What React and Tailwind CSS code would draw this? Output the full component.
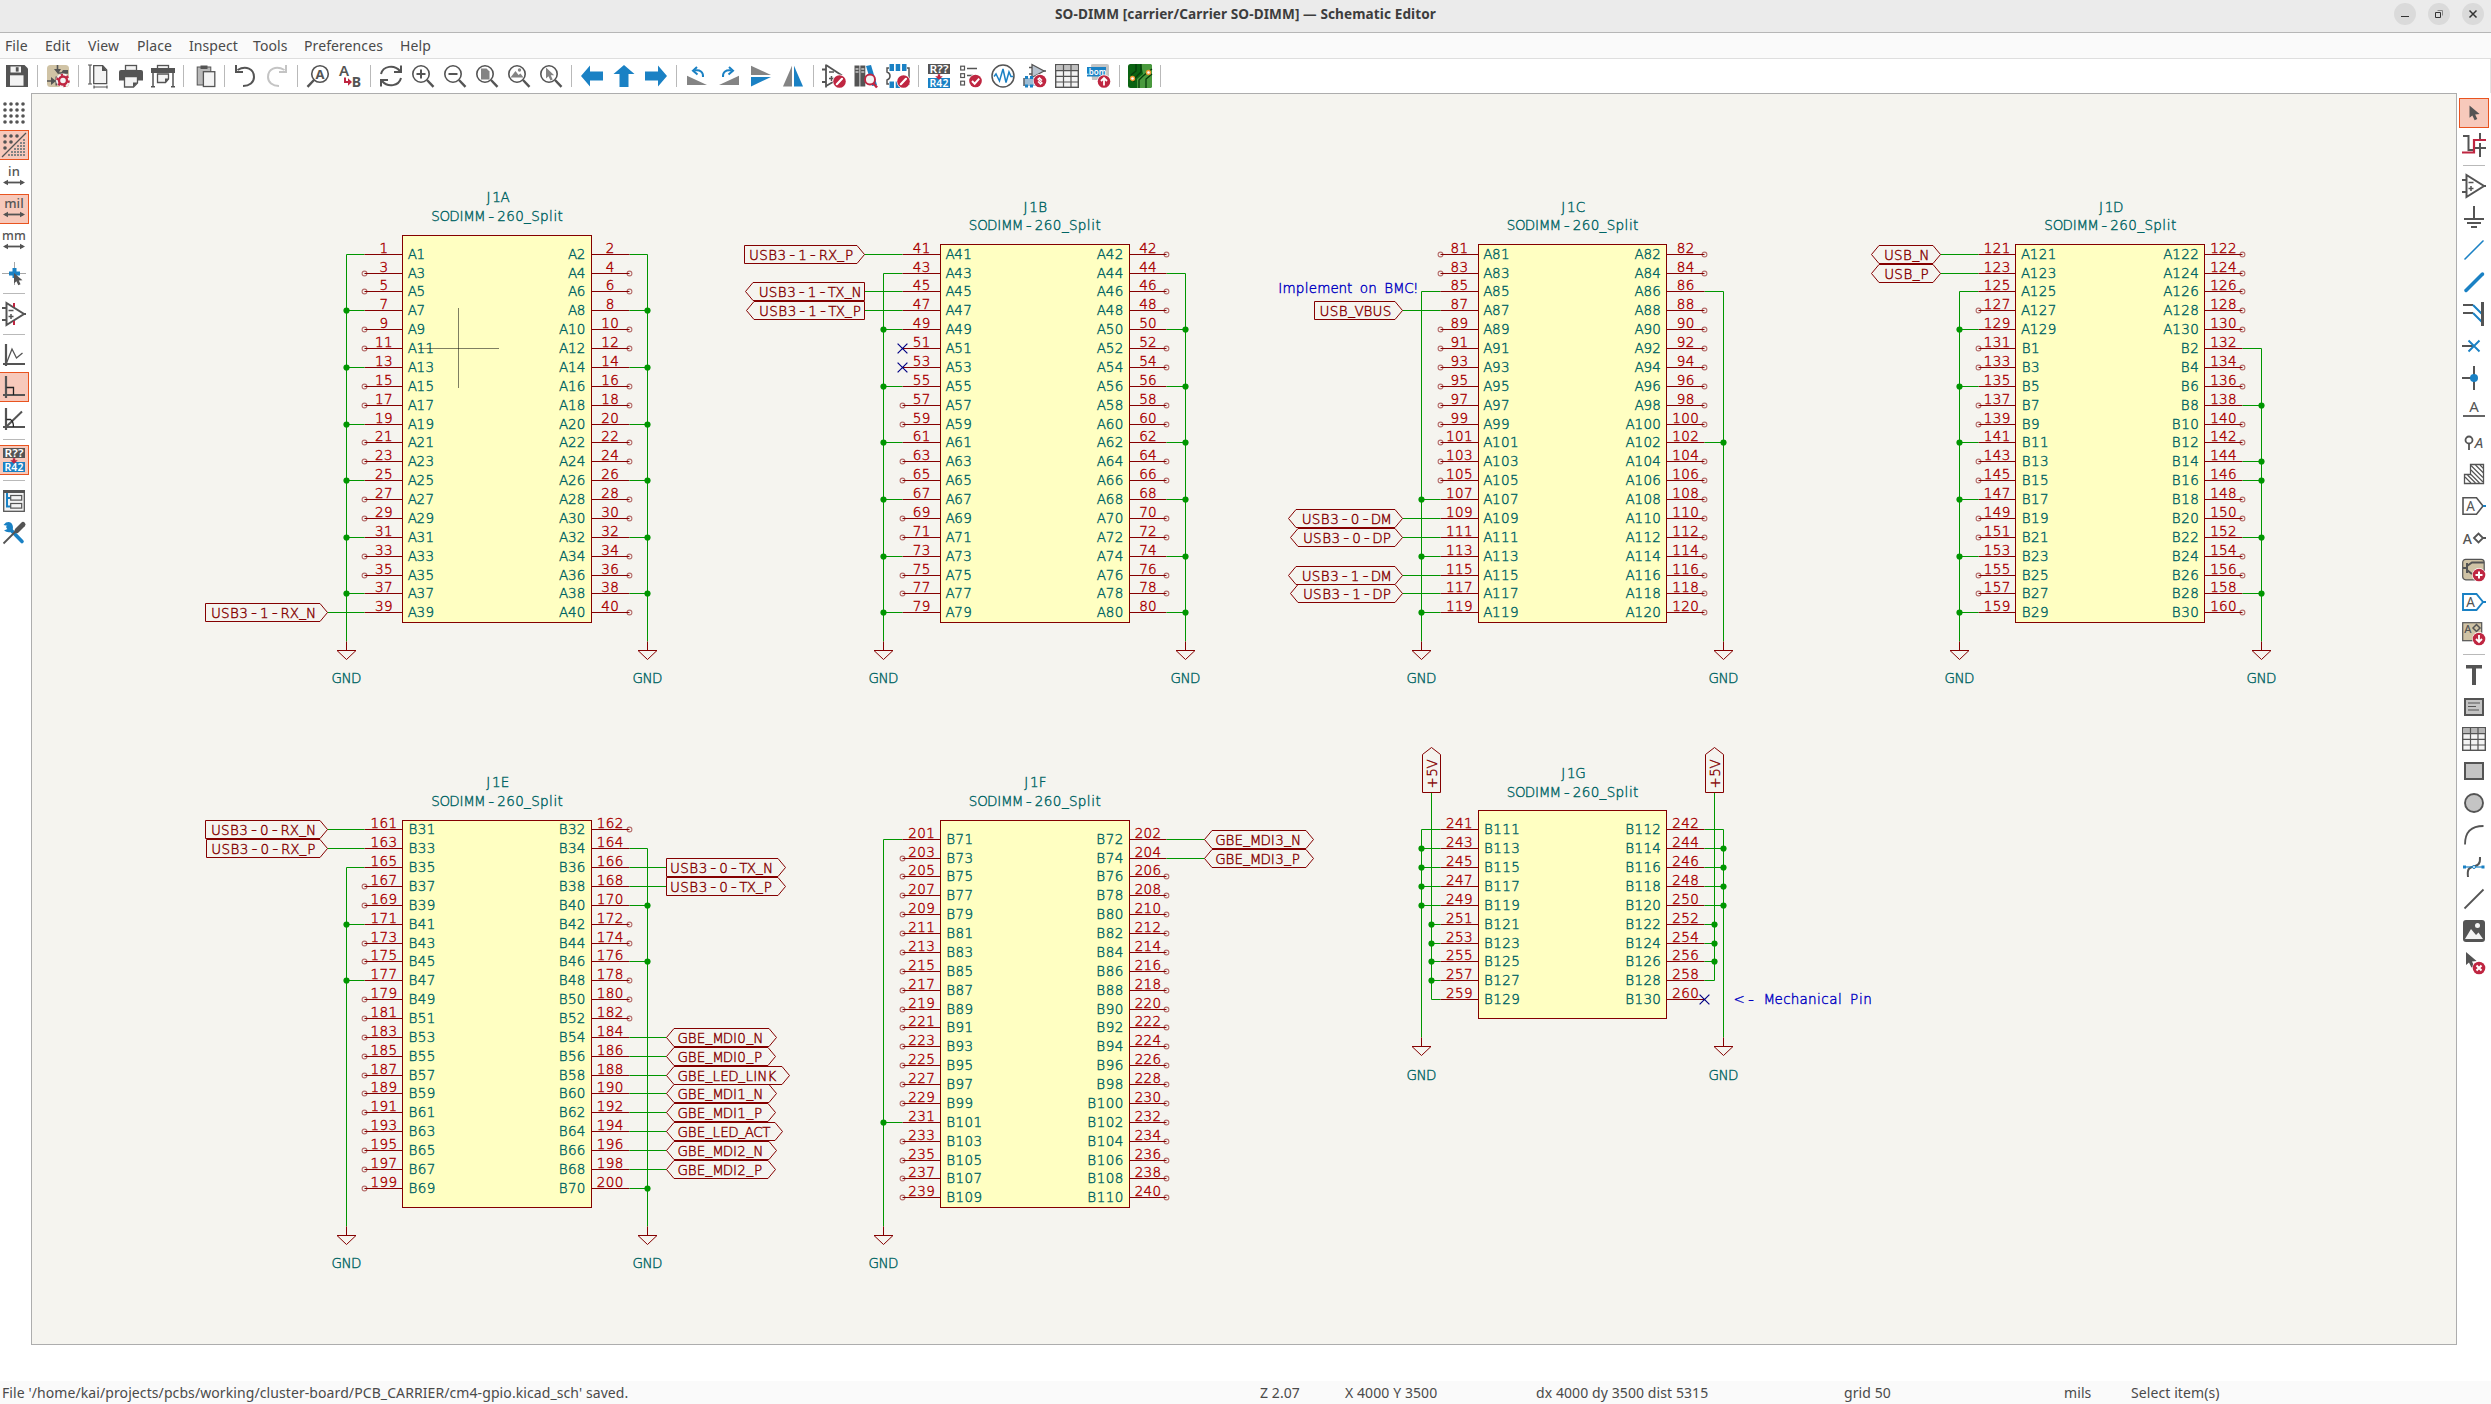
import React from "react";

const G = "#545454";
const B = "#1a81c4";
const R = "#bf2641";
const L = "#f3f3f3";
const M = "#848484";
const T = "#d0c3a5";
const SANS = "Noto Sans, Open Sans, sans-serif";

/* ---------- toolbar icons (24 x 24) ---------- */

const line = (d, w = 2, c = G, extra = {}) => <path d={d} fill="none" stroke={c} strokeWidth={w} {...extra} />;
const fill = (d, c = G) => <path d={d} fill={c} />;
const letter = (s, x, y, size, c = G, weight = 600, extra = {}) => (
  <text x={x} y={y} fontSize={size} fill={c} fontWeight={weight} fontFamily={SANS} textAnchor="middle" {...extra}>{s}</text>
);
const Badge = ({ x = 17.5, y = 17.5, r = 6.3, children }) => (
  <g>
    <circle cx={x} cy={y} r={r + 0.6} fill="#fff" />
    <circle cx={x} cy={y} r={r} fill={R} />
    {children}
  </g>
);
const Pencil = () => <Badge>{line("M14.8 20.2 20 14.8", 2.2, "#fff", { strokeLinecap: "round" })}</Badge>;
const Lens = ({ children }) => (
  <g>
    <circle cx="10" cy="10" r="8.2" fill="#fff" stroke={G} strokeWidth="1.6" />
    {line("M16 16 22.5 22.8", 2.4)}
    {children}
  </g>
);
const annotate = (
  <g>
    <rect x="1" y="0" width="22" height="10" fill={G} />
    {letter("R??", 12, 9, 10.5, "#fff", 600, { textLength: 19, lengthAdjust: "spacingAndGlyphs" })}
    <rect x="1" y="14" width="22" height="10" fill={B} />
    {letter("R42", 12, 22.8, 10.5, "#fff", 600, { textLength: 19, lengthAdjust: "spacingAndGlyphs" })}
    {fill("M10.8 10.2h2.4v2h2.6L12 15.8 8.2 12.2h2.6z", R)}
  </g>
);
const opamp = (
  <g>
    {line("M4.5 1v22L22 12z", 2)}
    {line("M0 6h4M0 18h4M21 12h3", 2)}
    {line("M6.5 8.5h5M6.5 14.5h5M9 12v5", 1.5)}
  </g>
);
const units = (s) => (
  <g>
    {letter(s, 12, 11, s === "mm" ? 12.5 : 13, G, 500)}
    {line("M3 17.5h18", 1.8)}
    {fill("M1 17.5 6 14.8v5.4zM23 17.5 18 14.8v5.4z")}
  </g>
);
const table = (head) => (
  <g>
    <rect x="0.7" y="0.7" width="22.6" height="22.6" fill={L} stroke={G} strokeWidth="1.4" />
    <rect x="1.3" y="1.3" width="21.4" height="5" fill={head} />
    {line("M1 6.7h22M1 12.4h22M1 18h22M8.5 1v22M16 1v22", 1.2)}
  </g>
);
const pointer = (x, y, k = 1) => (
  <path transform={`translate(${x} ${y}) scale(${k})`} d="M0 0v13l3-2.6 2.4 5 2.8-1.2L6 9.4l4.6-.4z" fill={G} />
);

const icons = {
  save: (
    <g>
      {fill("M1 1h18.5L23 4.5V23H1z")}
      <rect x="5.5" y="2.5" width="10.5" height="6" fill={L} />
      <rect x="10.8" y="3.2" width="2.8" height="4.4" fill={G} />
      <rect x="5" y="11.3" width="13.5" height="10.4" fill={L} />
    </g>
  ),
  setup: (
    <g>
      <rect x="1" y="1" width="22" height="22" rx="3.5" fill={T} />
      {line("M11.5 1v6M1 17h6M12 9h10", 1.6)}
      {fill("M8 5l4 5 3-5zM17 6h5v3h-7zM5 13l5 4-5 4zM9.5 12.5h1.5v9H9.5z")}
      <circle cx="17" cy="16.5" r="7" fill={L} />
      <circle cx="17" cy="16.5" r="4" fill="none" stroke={R} strokeWidth="2.4" />
      <circle cx="17" cy="16.5" r="5.8" fill="none" stroke={R} strokeWidth="2" strokeDasharray="2.4 3.67" />
    </g>
  ),
  page: (
    <g>
      {line("M3 1v19M1 1h4M1 20h4M7 23h13M7 21.5v3M20 21.5v3", 1.2)}
      <path d="M6.7 1.6h9l4 4.5v13.6h-13z" fill={L} stroke={G} strokeWidth="1.3" />
      {fill("M15 1v6h5z")}
    </g>
  ),
  print: (
    <g>
      <rect x="6.5" y="1.5" width="11" height="5" fill={L} stroke={G} strokeWidth="1.3" />
      <path d="M2 6h20q2 0 2 2v8.500H0V8q0-2 2-2z" fill={G} />
      <path d="M5.500 12.500h13V19l-4 4h-9z" fill={L} stroke={G} strokeWidth="1.3" />
      {fill("M14 23v-4.500h4.500z")}
    </g>
  ),
  plot: (
    <g>
      <rect x="6.5" y="1.500" width="11" height="4" fill={L} stroke={G} strokeWidth="1.3" />
      <rect x="0" y="4" width="24" height="5" fill={G} />
      {line("M2 9v14M22 9v14M0 22.800h4M20 22.800h4", 1.500)}
      <path d="M6.500 10h11v5l-3 3.500h-8z" fill={L} stroke={G} strokeWidth="1.3" />
      {fill("M14 18.500v-4h4z")}
    </g>
  ),
  paste: (
    <g>
      <rect x="5.200" y="3" width="13.600" height="18" fill="#b9b9b9" stroke={G} strokeWidth="1" />
      <rect x="8.500" y="1.500" width="7" height="3.500" fill={G} />
      <rect x="11.400" y="7.700" width="11.400" height="14.800" fill={L} stroke={G} strokeWidth="1.3" />
    </g>
  ),
  undo: (
    <g>
      {line("M4.500 6C13 1 21 5 21 13c0 5.500-4.500 9-11 9", 2)}
      {line("M3 1v7h7", 2)}
    </g>
  ),
  redo: (
    <g>
      {line("M19.500 6C11 1 3 5 3 13c0 5.500 4.500 9 11 9", 2, "#c4c4c4")}
      {line("M21 1v7h-7", 2, "#c4c4c4")}
    </g>
  ),
  find: (
    <g>
      <circle cx="14" cy="10" r="8.300" fill="#fff" stroke={G} strokeWidth="1.600" />
      {line("M8 16 1.500 22.800", 2.400)}
      {letter("A", 14, 14.800, 13, G, 700)}
    </g>
  ),
  replace: (
    <g>
      {letter("A", 6, 11.500, 15, G, 600)}
      {letter("B", 18.500, 23, 14, G, 700)}
      {line("M7 13.500v4.500h5", 2, R)}
      {fill("M10 14.300 14 18l-4 3.700z", R)}
    </g>
  ),
  refresh: (
    <g>
      {line("M2 10C4 2 15 0 21 7M22 14C20 22 9 24 3 17", 2)}
      {line("M22 1.500V8h-7M2 22.500V16h7", 2)}
    </g>
  ),
  zoomIn: <Lens>{line("M5.500 10h9M10 5.500v9", 2)}</Lens>,
  zoomOut: <Lens>{line("M5.500 10h9", 2)}</Lens>,
  zoomFit: <Lens>{fill("M6 4.500h5.500l3 3V15.500H6z", M)}</Lens>,
  zoomObj: <Lens>{fill("M3.500 13.500 8.500 7l3 4 2-1.500 3 4z", M)}<circle cx="12.500" cy="6" r="1.700" fill={M} /></Lens>,
  zoomSel: <Lens><path d="M7 3.500v11l2.500-2.300 2 4.300 2.200-1-2-4.200h3.500z" fill={M} /></Lens>,
  left: fill("M1 12 10 1.500V7.500h13v9H10V22.500z", B),
  up: fill("M12 1 22.500 10H16.500v13h-9V10H1.500z", B),
  right: fill("M23 12 14 1.500V7.500H1v9h13V22.500z", B),
  rotL: <g>{fill("M2 11.700 22 21H2z", M)}{line("M18 13c.5-5-3-7.500-8.500-6.500", 2, B)}{line("M12 3 8 6.800l4.500 3.700", 2, B)}</g>,
  rotR: <g>{fill("M22 11.700 2 21h20z", M)}{line("M6 13c-.5-5 3-7.500 8.500-6.500", 2, B)}{line("M12 3l4 3.800-4.500 3.700", 2, B)}</g>,
  mirV: <g>{fill("M2 1.700 22 11H2z", M)}{fill("M2 13h20L2 22.500z", B)}</g>,
  mirH: <g>{fill("M11 1.700V22.500H2z", M)}{fill("M13 1.700V22.500h9z", B)}</g>,
  symEd: (
    <g>
      {line("M4 .500v23M4 1 20 11.500M0 5.500h4M0 18h4M4 22l7-4", 1.800)}
      {line("M7 8h5M7 14.500h5M9.500 12v5", 1.500)}
      <Pencil />
    </g>
  ),
  symLib: (
    <g>
      {fill("M.500 1.500h5v21h-5zM6.300 1.500h5v21h-5z")}
      {line("M1.500 5h3M1.500 8h3M7.300 5h3M7.300 8h3", 1, "#fff")}
      {fill("M12 2l5-1 6 20-5 1z", B)}
      <circle cx="16" cy="15.500" r="5" fill={L} stroke={R} strokeWidth="1.900" />
      {line("M19.500 19.500 23 23.500", 2.500, R)}
    </g>
  ),
  fpEd: (
    <g>
      {line("M3 4H1v4q3 1 3 4t-3 4v4h2M21 4h2v17", 1.500)}
      {fill("M3.500 0h4.500v7H3.500zM9.700 0h4.500v7H9.700zM16 0h4.500v7H16zM3.500 17.500h4.500V24H3.500zM9.700 17.500h4.500V24H9.700z", B)}
      <Pencil />
    </g>
  ),
  annotate,
  erc: (
    <g>
      <rect x="1.700" y="2.200" width="3.800" height="3.800" fill="#fff" stroke={G} strokeWidth="1.200" />
      <rect x="1.700" y="9.700" width="3.800" height="3.800" fill="#fff" stroke={G} strokeWidth="1.200" />
      <rect x="1.700" y="17.200" width="3.800" height="3.800" fill="#fff" stroke={G} strokeWidth="1.200" />
      {line("M8 4.500h10M8 11.500h6", 1.500)}
      <Badge x={16.500} y={17}>{line("M13 17l2.700 2.700 4.500-5", 2, "#fff")}</Badge>
    </g>
  ),
  sim: (
    <g>
      <circle cx="12" cy="12" r="11" fill="#fff" stroke={G} strokeWidth="1.500" />
      {line("M3 12.500 5 10l3.500 7L12 5l3 13.500L18 8l2 4.500h2", 1.500, B)}
    </g>
  ),
  assign: (
    <g>
      <path d="M9 .500v13L21 7z" fill="#b9c4d0" stroke={G} strokeWidth="1.300" />
      {line("M6 3.500h3M6 10h3M20 7h3", 1.300)}
      {fill("M.500 14h12v8H.500z", "#9dbcd4")}
      {fill("M2 12h3v3H2zM7 12h3v3H7zM2 20.500h3v3H2zM7 20.500h3v3H7z", B)}
      {line("M1 14v8", 1.300)}
      <Badge x={17} y={17}>{line("M14.500 15.500l2-1.500 2.500 2.500M19.500 18.500l-2 1.500-2.500-2.500M15.500 15.500l3.500 3.500", 1.400, "#fff")}</Badge>
    </g>
  ),
  fields: table("#c0c0c0"),
  bom: (
    <g>
      <path d="M4 1q0-1 2-1h14q2 0 2 2v14H5z" fill="#c4c4c4" />
      <rect x="0" y="3" width="19" height="9.500" fill={B} />
      {letter(".bom", 9.500, 10.500, 8, "#fff", 600)}
      <Badge x={17} y={17.500}>{line("M17 21.500v-7M14 17l3-3 3 3", 1.800, "#fff")}</Badge>
    </g>
  ),
  pcb: (
    <g>
      <rect x="0" y="0" width="24" height="24" rx="2.500" fill="#0b6312" />
      <path d="M13 0h9q2 0 2 2v20q0 2-2 2H9V15l6-5z" fill="#4a9a3e" />
      {line("M8 0v7L3 11M13 0v8l-7 7v3M24 10l-6 5v9M24 5l-9 7-4 4v8", 1.300, "#063d0a")}
      <circle cx="20.500" cy="8.500" r="2" fill="#fff" stroke="#f0962e" strokeWidth="1.300" />
      <circle cx="4.500" cy="14.500" r="2" fill="#fff" stroke="#f0962e" strokeWidth="1.300" />
    </g>
  ),

  grid: (
    <g>{[3, 9, 15, 21].map((y) => [3, 9, 15, 21].map((x) => <circle key={`${x}-${y}`} cx={x} cy={y} r="1.800" fill={G} />))}</g>
  ),
  gridOver: (
    <g>
      {[[3, 3], [9, 3], [15, 3], [3, 9], [9, 9], [3, 15]].map(([x, y]) => <circle key={`${x}-${y}`} cx={x} cy={y} r="1.800" fill={G} />)}
      {[0, 1, 2, 3, 4, 5].map((r) => Array.from({ length: r + 1 }, (_, c) => (
        <rect key={`${r}-${c}`} x={21 - c * 3} y={6 + r * 3} width="2" height="2" fill={M} />
      )))}
      {line("M0 24 24 0", 1.200)}
    </g>
  ),
  inch: units("in"),
  mil: units("mil"),
  mm: units("mm"),
  cursor: <g>{line("M0 12.500h24M12.500 1v23", 1, "#a8a8a8")}{line("M7 12.500h11M12.500 7v10", 4, B)}{pointer(12, 12, 0.8)}</g>,
  hidden: <g>{line("M12 1v22", 2, R)}<path d="M4.500 1v22L22 12z" fill="#fff" />{opamp}{line("M12 1v4M12 19v4", 2, R)}</g>,
  free: <g>{line("M4 1v22M1 21h22", 2.200)}{line("M4.500 20 10 6l4.500 9 6-5", 1.300)}</g>,
  ang90: <g>{line("M4 1v22M1 20h22", 2.200)}{line("M4.500 12.500H11.500V20", 1.300, "#222")}</g>,
  ang45: <g>{line("M4 1v22M1 20h22", 2.200)}{line("M4 20 20 4.500", 2)}{line("M4.500 12.500h4q3 2 3 7.500", 1.300, "#222")}</g>,
  nav: (
    <g>
      <rect x="1.700" y="1.700" width="20.600" height="20.600" fill={L} stroke={G} strokeWidth="1.300" />
      <rect x="1" y="1" width="22" height="3" fill={G} />
      {line("M5 4v13.500h4M5 9h4", 2, B)}
      <rect x="8.700" y="6.500" width="11" height="4.600" fill={L} stroke={G} strokeWidth="1.200" />
      <rect x="8.700" y="14.500" width="11" height="4.600" fill={L} stroke={G} strokeWidth="1.200" />
    </g>
  ),
  tools: (
    <g>
      {line("M6 6 20 20.500", 3.600, B, { strokeLinecap: "round" })}
      {fill("M1.500 4 4 1.500l0 0Q9 0 10.500 4t-1.500 7Q5 12 2 9.500L5.500 8 6.500 5z", B)}
      {line("M1.500 22.500 14 10", 1.800)}
      {line("M15 9.500 21 3.500", 5, G, { strokeLinecap: "round" })}
    </g>
  ),

  select: pointer(7.500, 4.500, 0.95),
  highlight: <g>{line("M1 3h5.500v14H13M18 0v7M18 10v14M13 15h11", 2)}{line("M0 19.500h12V7h12", 2.200, R)}</g>,
  opamp,
  power: line("M12 0v13M2 13h20M5 17h14M9 21h6", 2),
  wire: line("M2.500 21.500 21.500 2.500", 1.500, B),
  bus: line("M4 20.500 20.500 4", 3.500, B, { strokeLinecap: "round" }),
  entry: <g>{line("M1 3h10M1 11h10", 2)}{line("M11 3 20 12M11 11l9 9", 2, B)}{line("M20.500 0v24", 3)}</g>,
  noconn: <g>{line("M0 12h11", 2)}{line("M6.500 6.500l11 11M17.500 6.500l-11 11", 1.900, B)}</g>,
  junction: <g>{line("M0 12h12M12 0v24", 2)}<circle cx="12" cy="12" r="4" fill={B} /></g>,
  label: <g>{letter("A", 12, 13.500, 15, G, 400)}{line("M1 18h22", 1.800)}</g>,
  netclass: <g><circle cx="7" cy="10" r="3.500" fill="none" stroke={G} strokeWidth="1.800" />{line("M7 13v7", 1.800)}{letter("A", 17, 17.500, 15, G, 400, { fontStyle: "italic" })}</g>,
  rule: (
    <g>
      <path d="M2.500 12.500h6v-10h13v19h-19z" fill="#fff" stroke={G} strokeWidth="1.300" />
      {line("M9 3.500 21 15.500M9 8 21 20M13.500 3l8 8M18 3l3.500 3.500M9 12.500l8.500 8.500M5.500 13l8 8M3 15l6 6", 1.200)}
    </g>
  ),
  glabel: <g>{line("M1 3.800h13.500L21 12l-6.500 8.200H1z", 1.600)}{line("M21 12h3", 2, B)}{letter("A", 8.500, 17, 13.500, G, 400)}</g>,
  hlabel: <g>{letter("A", 5.500, 17.500, 14, G, 500)}{line("M12 12l4.500-4.500L21 12l-4.500 4.500zM21 12h3", 1.800)}</g>,
  sheet: (
    <g>
      <rect x=".7" y="1.300" width="21.500" height="20.500" rx="3" fill={T} stroke={G} strokeWidth="1.200" />
      {line("M1 10h4M5 5v10M5 8l5-3.500h12M5 12l5 4", 2)}
      <Badge x={17} y={17}>{line("M13.500 17h7M17 13.500v7", 2, "#fff")}</Badge>
    </g>
  ),
  imports: <g>{line("M1 4h13.500L21 12l-6.500 8H1z", 1.900, B)}{line("M21 12h3", 2, B)}{letter("A", 8.500, 17, 13.500, G, 400)}</g>,
  sheetPin: (
    <g>
      <rect x=".700" y=".700" width="19" height="18" fill={T} stroke={G} strokeWidth="1.200" />
      {letter("A", 6, 10.500, 11, G, 500)}
      {line("M11 6l3.500-3.500L18 6l-3.500 3.500z", 1.500)}
      <Badge x={17} y={17}>{line("M17 13v7M14 17l3 3 3-3", 1.800, "#fff")}</Badge>
    </g>
  ),
  text: fill("M4 2h16v3.500h-6V22h-4V5.500H4z"),
  textbox: (
    <g>
      <rect x="3" y="4" width="18" height="16" fill="#c4c4c4" stroke={G} strokeWidth="2" />
      {line("M6 8h12M6 11.500h8M6 15h11", 1.200)}
    </g>
  ),
  table: table("#b5b5b5"),
  rect: <rect x="3" y="4" width="18" height="16" fill="#c4c4c4" stroke={G} strokeWidth="2" />,
  circle: <circle cx="12" cy="12" r="9" fill="#c4c4c4" stroke={G} strokeWidth="1.900" />,
  arc: line("M3 21.500C3 9 9 3 21.500 3", 1.800),
  bezier: <g>{line("M6 22c-1-8 1-9.500 5.500-10.500S18.500 9 18 2", 2)}{line("M2 12h19", 1.200, B)}{fill("M1 10.500h3v3H1zM19.500 10.500h3v3h-3z", B)}<circle cx="12" cy="12" r="1.500" fill="#fff" stroke={B} /></g>,
  gline: line("M2.500 21.500 21.500 2.500", 1.800),
  image: <g><rect x="1" y="1" width="22" height="22" rx="3" fill={G} />{fill("M3 20 9 10l5 6 2.500-2.500L21 20z", L)}<circle cx="15.500" cy="6.500" r="2.500" fill={L} /></g>,
  del: <g>{pointer(4, 1, 1)}<Badge x={17} y={17}>{line("M14.500 14.500l5 5M19.500 14.500l-5 5", 2, "#fff")}</Badge></g>,
};

const Icon = ({ name }) => <svg className="block h-6 w-6 overflow-visible" viewBox="0 0 24 24">{icons[name]}</svg>;

const TOP = "save | setup | page print plot | paste | undo redo | find replace | refresh zoomIn zoomOut zoomFit zoomObj zoomSel | left up right | rotL rotR mirV mirH | symEd symLib fpEd | annotate erc sim assign fields bom | pcb |".split(" ");
const LEFT = "grid gridOver* inch mil* mm cursor | hidden | free ang90* ang45 | annotate* | nav tools".split(" ");
const RIGHT = "select* highlight | opamp power wire bus entry noconn junction label netclass rule glabel hlabel sheet imports sheetPin | text textbox table rect circle arc bezier gline image del".split(" ");

function SideBar({ items, className }) {
  return (
    <div className={`flex shrink-0 flex-col pt-[4px] ${className}`}>
      {items.map((it, i) => {
        if (it === "|") return <div key={i} className="flex h-[9px] w-[30px] shrink-0 items-center justify-center"><div className="h-px w-[22px] bg-[#b9b9b9]" /></div>;
        const on = it.endsWith("*");
        return (
          <div key={i} className="flex h-8 w-[30px] shrink-0 items-center justify-center">
            <div className={`flex h-[30px] w-[30px] items-center justify-center ${on ? "border border-[#e95420] bg-[#f7c9bb]" : ""}`}>
              <Icon name={it.replace("*", "")} />
            </div>
          </div>
        );
      })}
    </div>
  );
}

/* ---------- schematic ---------- */

const PX = 18.865;
const PY = 18.87;
const U = 0.449;
const gx = (v) => Math.floor(v) + 0.5;
const gy = (i) => Math.floor(254.25 + PY * i) + 0.5;

const ADV = {
  S: 20, O: 22, D: 21, I: 10, M: 24, "-": 26, _: 16, U: 22, B: 21, R: 21, X: 20, N: 22, P: 21, T: 16, V: 18, G: 21, E: 19,
  L: 17, K: 21, A: 18, C: 21, J: 16, F: 18, "+": 26, "<": 26, " ": 16, "!": 10, m: 30, p: 19, l: 10, e: 18, n: 19, t: 12,
  o: 19, i: 10, c: 18, h: 19, a: 19,
};
const adv = (c) => (ADV[c] ?? 20) * U;
const width = (s) => [...s].reduce((w, c) => w + adv(c), 0);

/* Plotter-style lettering: every glyph is centred in its own advance cell, dashes are wide, underscores sit high. */
function Stroke({ s, x, y, align = "start", color, transform }) {
  const w = width(s);
  let pen = align === "start" ? x : align === "end" ? x - w : x - w / 2;
  const runs = s.split(/([-_])/).filter(Boolean).map((run) => ({
    run,
    xs: [...run].map((c) => {
      const mid = pen + adv(c) / 2;
      pen += adv(c);
      return mid.toFixed(1);
    }).join(" "),
  }));
  const common = { fill: color, stroke: color, textAnchor: "middle", transform };
  if (runs.length === 1) return <text x={runs[0].xs} y={y} {...common}>{s}</text>;
  return (
    <text {...common}>
      {runs.map(({ run, xs }, k) => {
        if (run === "-") return <tspan key={k} x={xs} y={y + 0.9} fontFamily="Inter, sans-serif" fontWeight="300" fontSize="15.5" strokeWidth="0.1">-</tspan>;
        if (run === "_") return <tspan key={k} x={xs} y={y - 1.6}>_</tspan>;
        return <tspan key={k} x={xs} y={y}>{run}</tspan>;
      })}
    </text>
  );
}

const RED = "#840000";
const TEAL = "#006464";
const GREEN = "#009600";

function Label({ s, kind, side, x, i }) {
  const y = gy(i);
  const d = side === "left" ? -1 : 1;
  const total = width(s) + (kind === "bidi" ? 24 : 16.3);
  const x0 = gx(x);
  const x1 = gx(x + d * total);
  const k = 7.5 * d;
  const t = y - 9;
  const b = y + 9;
  const near = kind === "out" ? `M${x0} ${t}V${b}` : `M${x0 + k} ${t}L${x0} ${y}L${x0 + k} ${b}`;
  const far = kind === "in" ? `H${x1}V${t}Z` : `H${x1 - k}L${x1} ${y}L${x1 - k} ${t}Z`;
  const pad = kind === "out" ? 3.4 : 11.2;
  return (
    <g>
      <path d={near + far} fill="none" stroke={RED} strokeWidth="1" />
      <Stroke s={s} x={x + d * pad} y={y + 5} align={side === "left" ? "end" : "start"} color={RED} />
    </g>
  );
}

function Gnd({ x, i }) {
  const y = gy(i + 0.5);
  return (
    <g>
      <path d={`M${x} ${gy(i)}V${y}M${x - 9.5} ${y}H${x + 9.5}L${x} ${y + 9}Z`} fill="none" stroke={RED} strokeWidth="1" />
      <Stroke s="GND" x={x} y={gy(i + 2) + 4.6} align="middle" color={TEAL} />
    </g>
  );
}

function Side({ part, side, cfg }) {
  const left = side === "left";
  const d = left ? -1 : 1;
  const edge = left ? part.x : part.x + 10 * PX;
  const e = gx(edge);
  const end = gx(edge + d * 2 * PX);
  const bus = gx(edge + d * 3 * PX);
  const { start, dots = [], labels = {}, nc = [], gnd, rails } = cfg;
  return (
    <g>
      {start !== undefined && <path d={`M${end} ${gy(part.r0 + start)}H${bus}V${gy(gnd)}`} fill="none" stroke={GREEN} strokeWidth="1" />}
      {gnd !== undefined && <Gnd x={bus} i={gnd} />}
      {part[side].map((name, r) => {
        const y = gy(part.r0 + r);
        const num = String(part.n0 + 2 * r + (left ? 0 : 1));
        const lab = labels[r];
        const wired = r === start || dots.includes(r);
        return (
          <g key={r}>
            <path d={`M${e} ${y}H${end}`} stroke={RED} strokeWidth="1" />
            <Stroke s={num} x={edge + d * PX} y={y - 2} align="middle" color="#a90000" />
            <Stroke s={name} x={edge - d * 5.6} y={y + 4.9} align={left ? "start" : "end"} color={TEAL} />
            {dots.includes(r) && <><path d={`M${end} ${y}H${bus}`} stroke={GREEN} strokeWidth="1" /><circle cx={bus} cy={y} r="3.1" fill={GREEN} /></>}
            {lab && <><path d={`M${end} ${y}H${gx(edge + d * 4 * PX)}`} stroke={GREEN} strokeWidth="1" /><Label s={lab[0]} kind={lab[1]} side={side} x={edge + d * 4 * PX} i={part.r0 + r} /></>}
            {nc.includes(r) && <path d={`M${end - 4.9} ${y - 4.9}l9.800 9.800M${end + 4.9} ${y - 4.9}l-9.800 9.800`} stroke="#000084" strokeWidth="1.200" />}
            {!wired && !lab && !nc.includes(r) && !(rails && r > 4) && <circle cx={end} cy={y} r="2.4" fill="none" stroke={RED} strokeOpacity=".55" strokeWidth="1.100" />}
          </g>
        );
      })}
      {rails && <Rail x={gx(edge + d * 2.5 * PX + 0.1)} end={end} r0={part.r0} last={rails} />}
    </g>
  );
}

function Rail({ x, end, r0, last }) {
  const b = gy(28.5);
  const rows = Array.from({ length: last - 5 }, (_, k) => 5 + k);
  return (
    <g>
      <path d={`M${x} ${b}V${gy(r0 + last)}H${end}`} fill="none" stroke={GREEN} strokeWidth="1" />
      {rows.map((r) => (
        <g key={r}>
          <path d={`M${x} ${gy(r0 + r)}H${end}`} stroke={GREEN} strokeWidth="1" />
          <circle cx={x} cy={gy(r0 + r)} r="3.1" fill={GREEN} />
        </g>
      ))}
      <path d={`M${x - 9} ${b}V${b - 38}L${x} ${b - 45}L${x + 9} ${b - 38}V${b}Z`} fill="none" stroke={RED} strokeWidth="1" />
      <Stroke s="+5V" x={0} y={0} color={RED} transform={`translate(${x + 5} ${b - 4}) rotate(-90)`} />
    </g>
  );
}

const seq = (p, from, n) => Array.from({ length: n }, (_, k) => `${p}${from + 2 * k}`);
const X0 = 402.68;
const COL = 537.75;

const parts = [
  {
    ref: "J1A", x: X0, top: -1, bottom: 19.5, r0: 0, n0: 1, left: seq("A", 1, 20), right: seq("A", 2, 20),
    l: { start: 0, dots: [3, 6, 9, 12, 15, 18], labels: { 19: ["USB3-1-RX_N", "in"] }, gnd: 20.5 },
    r: { start: 0, dots: [3, 6, 9, 12, 15, 18], gnd: 20.5 },
  },
  {
    ref: "J1B", x: X0 + COL, top: -0.5, bottom: 19.5, r0: 0, n0: 41, left: seq("A", 41, 20), right: seq("A", 42, 20),
    l: { start: 1, dots: [4, 7, 10, 13, 16, 19], nc: [5, 6], gnd: 20.5, labels: { 0: ["USB3-1-RX_P", "in"], 2: ["USB3-1-TX_N", "out"], 3: ["USB3-1-TX_P", "out"] } },
    r: { start: 1, dots: [4, 7, 10, 13, 16, 19], gnd: 20.5 },
  },
  {
    ref: "J1C", x: X0 + 2 * COL, top: -0.5, bottom: 19.5, r0: 0, n0: 81, left: seq("A", 81, 20), right: seq("A", 82, 20),
    l: {
      start: 2, dots: [13, 16, 19], gnd: 20.5,
      labels: { 3: ["USB_VBUS", "in"], 14: ["USB3-0-DM", "bidi"], 15: ["USB3-0-DP", "bidi"], 17: ["USB3-1-DM", "bidi"], 18: ["USB3-1-DP", "bidi"] },
    },
    r: { start: 2, dots: [10], gnd: 20.5 },
  },
  {
    ref: "J1D", x: X0 + 3 * COL, top: -0.5, bottom: 19.5, r0: 0, n0: 121,
    left: [...seq("A", 121, 5), ...seq("B", 1, 15)], right: [...seq("A", 122, 5), ...seq("B", 2, 15)],
    l: { start: 2, dots: [4, 7, 10, 13, 16, 19], gnd: 20.5, labels: { 0: ["USB_N", "bidi"], 1: ["USB_P", "bidi"] } },
    r: { start: 5, dots: [8, 11, 12, 15, 18], gnd: 20.5 },
  },
  {
    ref: "J1E", x: X0, top: 30, bottom: 50.5, r0: 30.5, n0: 161, left: seq("B", 31, 20), right: seq("B", 32, 20),
    l: { start: 2, dots: [5, 8], gnd: 51.5, labels: { 0: ["USB3-0-RX_N", "in"], 1: ["USB3-0-RX_P", "in"] } },
    r: {
      start: 1, dots: [4, 7, 19], gnd: 51.5,
      labels: {
        2: ["USB3-0-TX_N", "out"], 3: ["USB3-0-TX_P", "out"], 11: ["GBE_MDI0_N", "bidi"], 12: ["GBE_MDI0_P", "bidi"],
        13: ["GBE_LED_LINK", "bidi"], 14: ["GBE_MDI1_N", "bidi"], 15: ["GBE_MDI1_P", "bidi"], 16: ["GBE_LED_ACT", "bidi"],
        17: ["GBE_MDI2_N", "bidi"], 18: ["GBE_MDI2_P", "bidi"],
      },
    },
  },
  {
    ref: "J1F", x: X0 + COL, top: 30, bottom: 50.5, r0: 31, n0: 201, left: seq("B", 71, 20), right: seq("B", 72, 20),
    l: { start: 0, dots: [15], gnd: 51.5 },
    r: { labels: { 0: ["GBE_MDI3_N", "bidi"], 1: ["GBE_MDI3_P", "bidi"] } },
  },
  {
    ref: "J1G", x: X0 + 2 * COL, top: 29.5, bottom: 40.5, r0: 30.5, n0: 241, left: seq("B", 111, 10), right: seq("B", 112, 10),
    l: { start: 0, dots: [1, 2, 3, 4], gnd: 41.5, rails: 9 },
    r: { start: 0, dots: [1, 2, 3, 4], gnd: 41.5, rails: 8, nc: [9] },
  },
];

function Part({ part }) {
  const x = gx(part.x);
  const r = gx(part.x + 10 * PX);
  const t = gy(part.top);
  const mid = part.x + 5 * PX;
  return (
    <g>
      <rect x={x} y={t} width={r - x} height={gy(part.bottom) - t} fill="#ffffc2" stroke={RED} strokeWidth="1" />
      <Stroke s={part.ref} x={mid} y={gy(part.top - 2) + 4.8} align="middle" color={TEAL} />
      <Stroke s="SODIMM-260_Split" x={mid} y={gy(part.top - 1) + 4.8} align="middle" color={TEAL} />
      <Side part={part} side="left" cfg={part.l} />
      <Side part={part} side="right" cfg={part.r} />
    </g>
  );
}

function Schematic() {
  return (
    <svg className="block h-full w-full" viewBox="32 94 2424 1250" fontFamily="DejaVu Sans, sans-serif" fontWeight="200" fontSize="13.5" strokeWidth="0.4">
      {parts.map((p) => <Part key={p.ref} part={p} />)}
      <path d="M419 348.500H499M458.500 308V388" stroke="#000" strokeOpacity=".5" strokeWidth="1" />
      <Stroke s="Implement on BMC!" x={1278} y={293} color="#0000c2" />
      <Stroke s="<- Mechanical Pin" x={1733.500} y={1004.300} color="#0000c2" />
    </svg>
  );
}

/* ---------- window ---------- */

function WinButton({ children }) {
  return (
    <div className="flex h-[22px] w-[22px] items-center justify-center rounded-full bg-[#dadada]">
      <svg className="h-3 w-3" viewBox="0 0 12 12" fill="none" stroke="#333" strokeWidth="1">{children}</svg>
    </div>
  );
}

export default function App() {
  return (
    <div className="flex h-[1404px] w-[2491px] flex-col overflow-hidden bg-white font-['Noto_Sans','Open_Sans',sans-serif] text-[14px] leading-none tracking-[0.09px] text-[#4a4a4a]">
      <header className="grid h-[33px] shrink-0 grid-cols-[1fr_auto_1fr] border-b border-[#b6b6b6] bg-[#ebebeb]">
        <div />
        <div className="pt-[7px] text-[13.6px] font-bold whitespace-nowrap text-[#3d3d3d]">SO-DIMM [carrier/Carrier SO-DIMM] — Schematic Editor</div>
        <div className="flex justify-end gap-3 pt-[3px] pr-[7px]">
          <WinButton><path d="M2 8.500h8" /></WinButton>
          <WinButton><path d="M2.500 4.500h5v5h-5z" /><path d="M4.500 2.500h5v5" stroke="#888" /></WinButton>
          <WinButton><path d="M2.500 2.500l7 7M9.500 2.500l-7 7" strokeWidth="1.500" /></WinButton>
        </div>
      </header>

      <nav className="flex h-[26px] shrink-0 items-center border-b border-[#dedede] bg-[#fafafa] pl-[5px] whitespace-nowrap">
        <span className="w-[40px]">File</span>
        <span className="w-[43px]">Edit</span>
        <span className="w-[49px]">View</span>
        <span className="w-[52px]">Place</span>
        <span className="w-[64px]">Inspect</span>
        <span className="w-[51px]">Tools</span>
        <span className="w-[96px]">Preferences</span>
        <span>Help</span>
      </nav>

      <div className="flex h-[34px] shrink-0 items-center border-r border-[#e2e2e2] pl-px">
        {TOP.map((it, i) => it === "|"
          ? <div key={i} className="flex w-[9px] justify-center"><div className="h-[22px] w-px bg-[#b9b9b9]" /></div>
          : <div key={i} className="flex h-8 w-8 items-center justify-center"><Icon name={it} /></div>)}
      </div>

      <main className="flex h-[1252px] shrink-0">
        <SideBar items={LEFT} className="-ml-px w-8" />
        <div className="h-full w-[2426px] shrink-0 border border-[#adadad] bg-[#f5f4ef]">
          <Schematic />
        </div>
        <SideBar items={RIGHT} className="w-[34px] pl-[2px]" />
      </main>

      <footer className="mt-auto flex h-[23px] shrink-0 items-center bg-[#fafafa] pl-[2px] whitespace-nowrap">
        <span className="w-[1258px]">File '/home/kai/projects/pcbs/working/cluster-board/PCB_CARRIER/cm4-gpio.kicad_sch' saved.</span>
        <span className="w-[85px]">Z 2.07</span>
        <span className="w-[191px]">X 4000 Y 3500</span>
        <span className="w-[308px]">dx 4000 dy 3500 dist 5315</span>
        <span className="w-[220px]">grid 50</span>
        <span className="w-[67px]">mils</span>
        <span>Select item(s)</span>
      </footer>
    </div>
  );
}
